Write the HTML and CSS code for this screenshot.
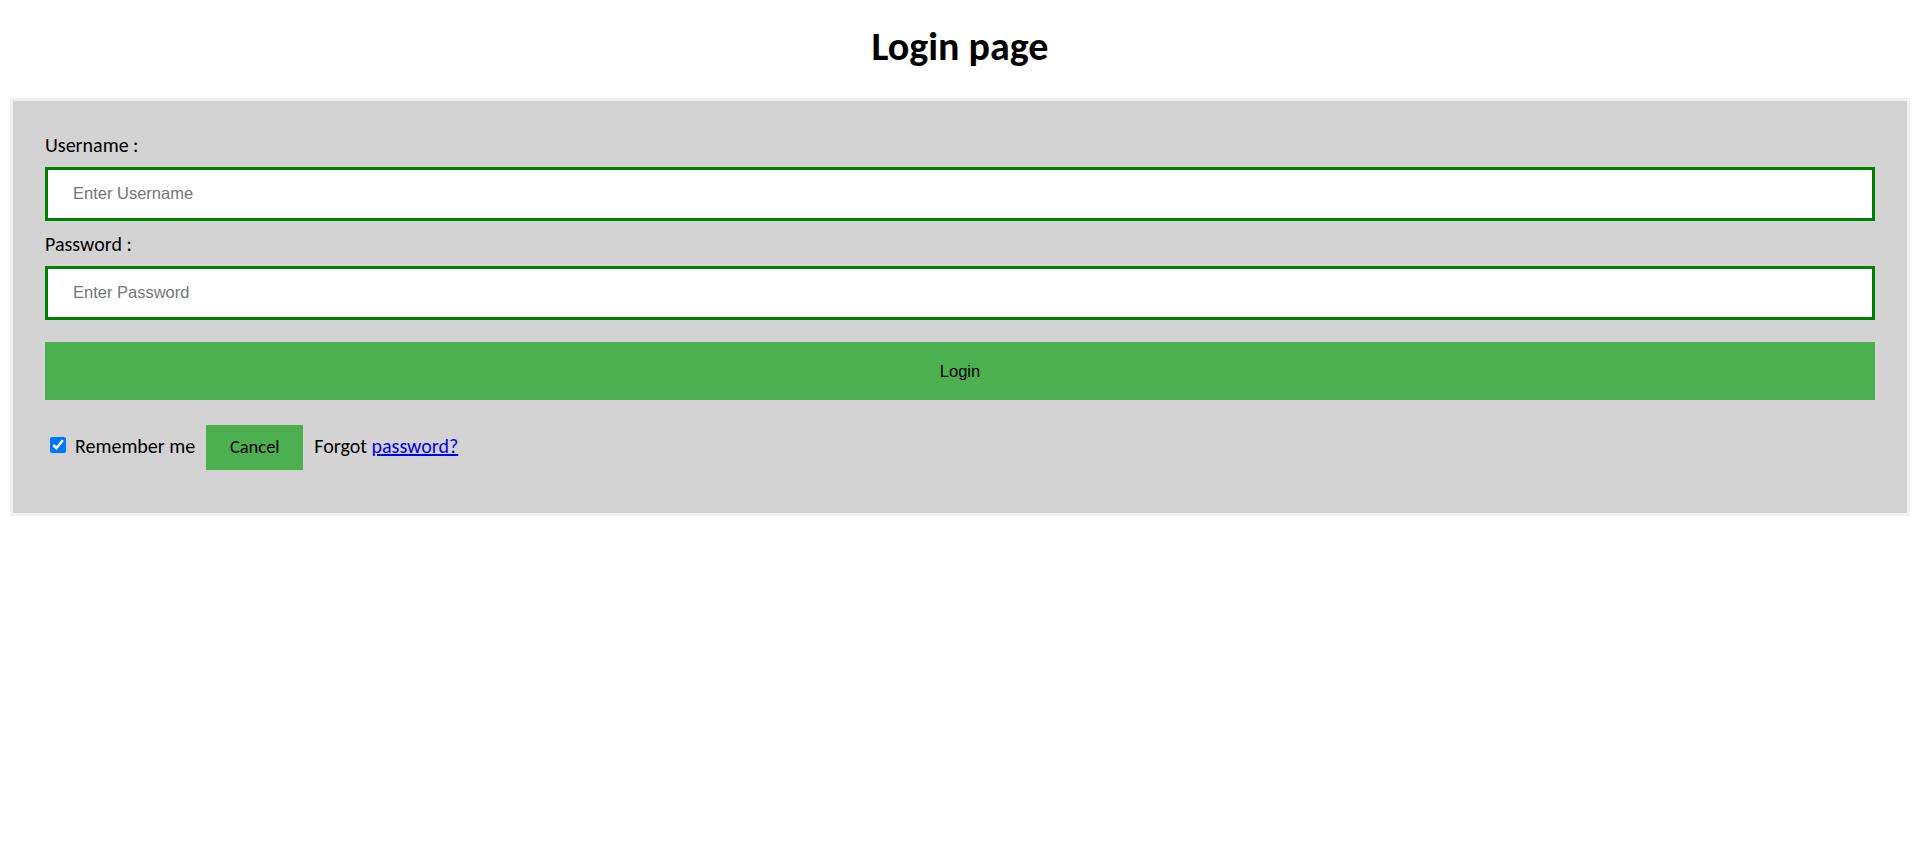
FILE: index.html
```html
<!DOCTYPE html>
<html lang="en">
<head>
<meta charset="utf-8">
<title>Login page</title>
<link rel="stylesheet" href="styles.css">
</head>
<body>
  <h1 class="title">Login page</h1>
  <form class="login-form">
    <div class="container">
      <label class="field-label" for="username">Username :</label>
      <input class="text-input" id="username" type="text" placeholder="Enter Username">
      <label class="field-label" for="password">Password :</label>
      <input class="text-input" id="password" type="password" placeholder="Enter Password">
      <button class="login-btn" type="button">Login</button>
      <div class="bottom-row">
        <input class="remember-check" type="checkbox" checked>
        <span class="remember-text">Remember me</span>
        <button class="cancel-btn" type="button">Cancel</button>
        <span class="forgot">Forgot <a class="forgot-link" href="#">password?</a></span>
      </div>
    </div>
  </form>
</body>
</html>
```
FILE: styles.css
```css
html, body {
  background: #ffffff;
}
body {
  margin: 0 10px;
  font-family: Calibri, Carlito, Lato, "Noto Sans", sans-serif;
  font-size: 20px;
  color: #000;
}
.title {
  margin: 0;
  padding: 21px 0 25px;
  text-align: center;
  font-size: 40px;
  line-height: 52px;
  font-weight: 700;
}
.login-form {
  border: 3px solid #f1f1f1;
  margin: 0;
}
.container {
  background: #d3d3d3;
  padding: 32px 32px 43px;
}
.field-label {
  display: block;
  line-height: 24px;
  margin: 0;
}
.text-input {
  display: block;
  box-sizing: border-box;
  width: 100%;
  height: 54px;
  margin: 10px 0 11px;
  padding: 0 25px 1px;
  border: 3px solid #008000;
  background: #fff;
  font-family: "Liberation Sans", Arial, sans-serif;
  font-size: 16.5px;
  outline: none;
}
.text-input::placeholder {
  color: #757575;
}
.login-btn {
  display: block;
  width: 100%;
  height: 58px;
  margin: 22px 0 0;
  padding: 0;
  border: none;
  background: #4caf50;
  color: #000;
  font-family: "Liberation Sans", Arial, sans-serif;
  font-size: 16.5px;
  cursor: pointer;
}
.bottom-row {
  display: flex;
  align-items: center;
  margin-top: 25px;
  height: 45px;
}
.remember-check {
  width: 16px;
  height: 16px;
  margin: 0 9px 6px 5px;
}
.remember-text {
  margin-right: 11px;
  padding-bottom: 3px;
}
.forgot {
  padding-bottom: 3px;
}
.cancel-btn {
  width: 97px;
  height: 45px;
  padding: 0 0 2px;
  border: none;
  background: #4caf50;
  color: #000;
  font-family: Calibri, Carlito, Lato, "Noto Sans", sans-serif;
  font-size: 18.5px;
  margin-right: 11px;
  cursor: pointer;
}
.forgot-link {
  color: #0000ee;
  text-decoration: underline;
}
```
